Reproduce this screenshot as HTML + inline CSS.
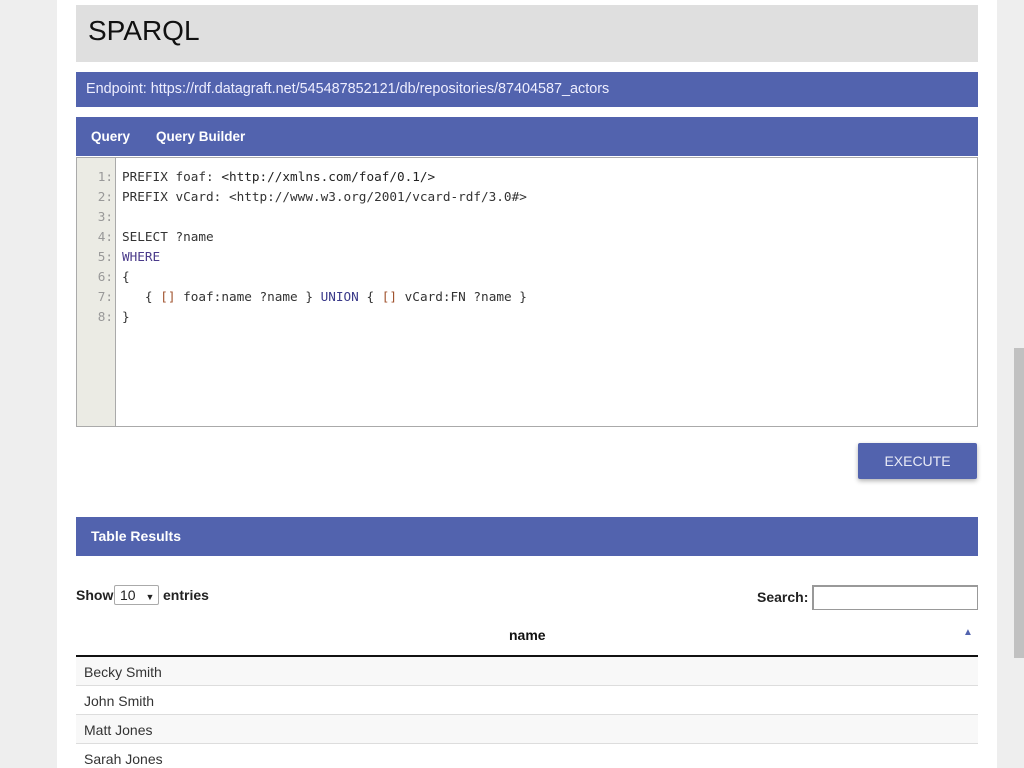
<!DOCTYPE html>
<html><head><style>
*{margin:0;padding:0;box-sizing:border-box}
body{width:1024px;height:768px;overflow:hidden;background:#eeeeee;font-family:"Liberation Sans",sans-serif;position:relative}
.page{position:absolute;left:57px;top:0;width:940px;height:768px;background:#fff;overflow:hidden}
.abs{position:absolute}
.bar{background:#5263ae;color:#fff}
.code{font-family:"DejaVu Sans Mono","Liberation Mono",monospace;font-size:12.7px;line-height:20px}
</style></head><body>
<div class="page">
<div class="abs" style="left:19px;top:5px;width:902px;height:57px;background:#dfdfdf"></div>
<div class="abs" style="left:31px;top:15px;font-size:28px;color:#111">SPARQL</div>
<div class="abs bar" style="left:19px;top:72px;width:902px;height:35px;font-size:14.4px;padding:9px 0 0 10px;color:#eef">Endpoint: https://rdf.datagraft.net/545487852121/db/repositories/87404587_actors</div>
<div class="abs bar" style="left:19px;top:117px;width:902px;height:39px;font-size:13.5px;font-weight:bold;padding:12px 0 0 15px">Query<span style="margin-left:26px">Query Builder</span></div>
<div class="abs" style="left:19px;top:157px;width:902px;height:270px;border:1px solid #aaa;background:#fff"></div>
<div class="abs" style="left:20px;top:158px;width:39px;height:268px;background:#ebebe4;border-right:1px solid #aaa"></div>
<div class="abs code" style="left:20px;top:167px;width:36px;text-align:right;color:#999">1:<br>2:<br>3:<br>4:<br>5:<br>6:<br>7:<br>8:</div>
<div class="abs code" style="left:65px;top:167px;color:#333;white-space:pre">PREFIX foaf: <span style="color:#222">&lt;http://xmlns.com/foaf/0.1/&gt;</span>
PREFIX vCard: &lt;http://www.w3.org/2001/vcard-rdf/3.0#&gt;

SELECT ?name
<span style="color:#4a3a8a">WHERE</span>
{
   { <span style="color:#a0522d">[]</span> foaf:name ?name } <span style="color:#3a3a8a">UNION</span> { <span style="color:#a0522d">[]</span> vCard:FN ?name }
}</div>
<div class="abs bar" style="left:801px;top:443px;width:119px;height:36px;border-radius:2px;box-shadow:0 2px 5px rgba(0,0,0,0.3);font-size:14px;text-align:center;line-height:36px;color:#e8eaf6">EXECUTE</div>
<div class="abs bar" style="left:19px;top:517px;width:902px;height:39px;font-size:14px;font-weight:bold;padding:11px 0 0 15px">Table Results</div>
<div class="abs" style="left:19px;top:587px;font-size:14px;font-weight:bold;color:#222">Show</div>
<div class="abs" style="left:57px;top:585px;width:45px;height:20px;border:1px solid #aaa;border-radius:2px;font-size:14px;padding:1px 0 0 5px;color:#222">10 <span style="font-size:9px;margin-left:6px">▼</span></div>
<div class="abs" style="left:106px;top:587px;font-size:14px;font-weight:bold;color:#222">entries</div>
<div class="abs" style="left:700px;top:589px;font-size:14px;font-weight:bold;color:#222">Search:</div>
<div class="abs" style="left:755px;top:585px;width:166px;height:25px;border:1px solid #999;border-top:2px solid #999;border-left:2px solid #999"></div>
<div class="abs" style="left:452px;top:627px;font-size:14px;font-weight:bold;color:#111">name</div>
<div class="abs" style="left:906px;top:627px;font-size:10px;color:#5263ae">▲</div>
<div class="abs" style="left:19px;top:655px;width:902px;height:2px;background:#111"></div>
<div class="abs" style="left:19px;top:657px;width:902px;height:29px;background:#f8f8f8;border-bottom:1px solid #ddd;font-size:14px;color:#333;padding:7px 8px">Becky Smith</div>
<div class="abs" style="left:19px;top:686px;width:902px;height:29px;background:#fff;border-bottom:1px solid #ddd;font-size:14px;color:#333;padding:7px 8px">John Smith</div>
<div class="abs" style="left:19px;top:715px;width:902px;height:29px;background:#f8f8f8;border-bottom:1px solid #ddd;font-size:14px;color:#333;padding:7px 8px">Matt Jones</div>
<div class="abs" style="left:19px;top:744px;width:902px;height:29px;background:#fff;font-size:14px;color:#333;padding:7px 8px">Sarah Jones</div>
</div>
<div class="abs" style="left:1014px;top:348px;width:10px;height:310px;background:#c1c1c1"></div>
</body></html>
